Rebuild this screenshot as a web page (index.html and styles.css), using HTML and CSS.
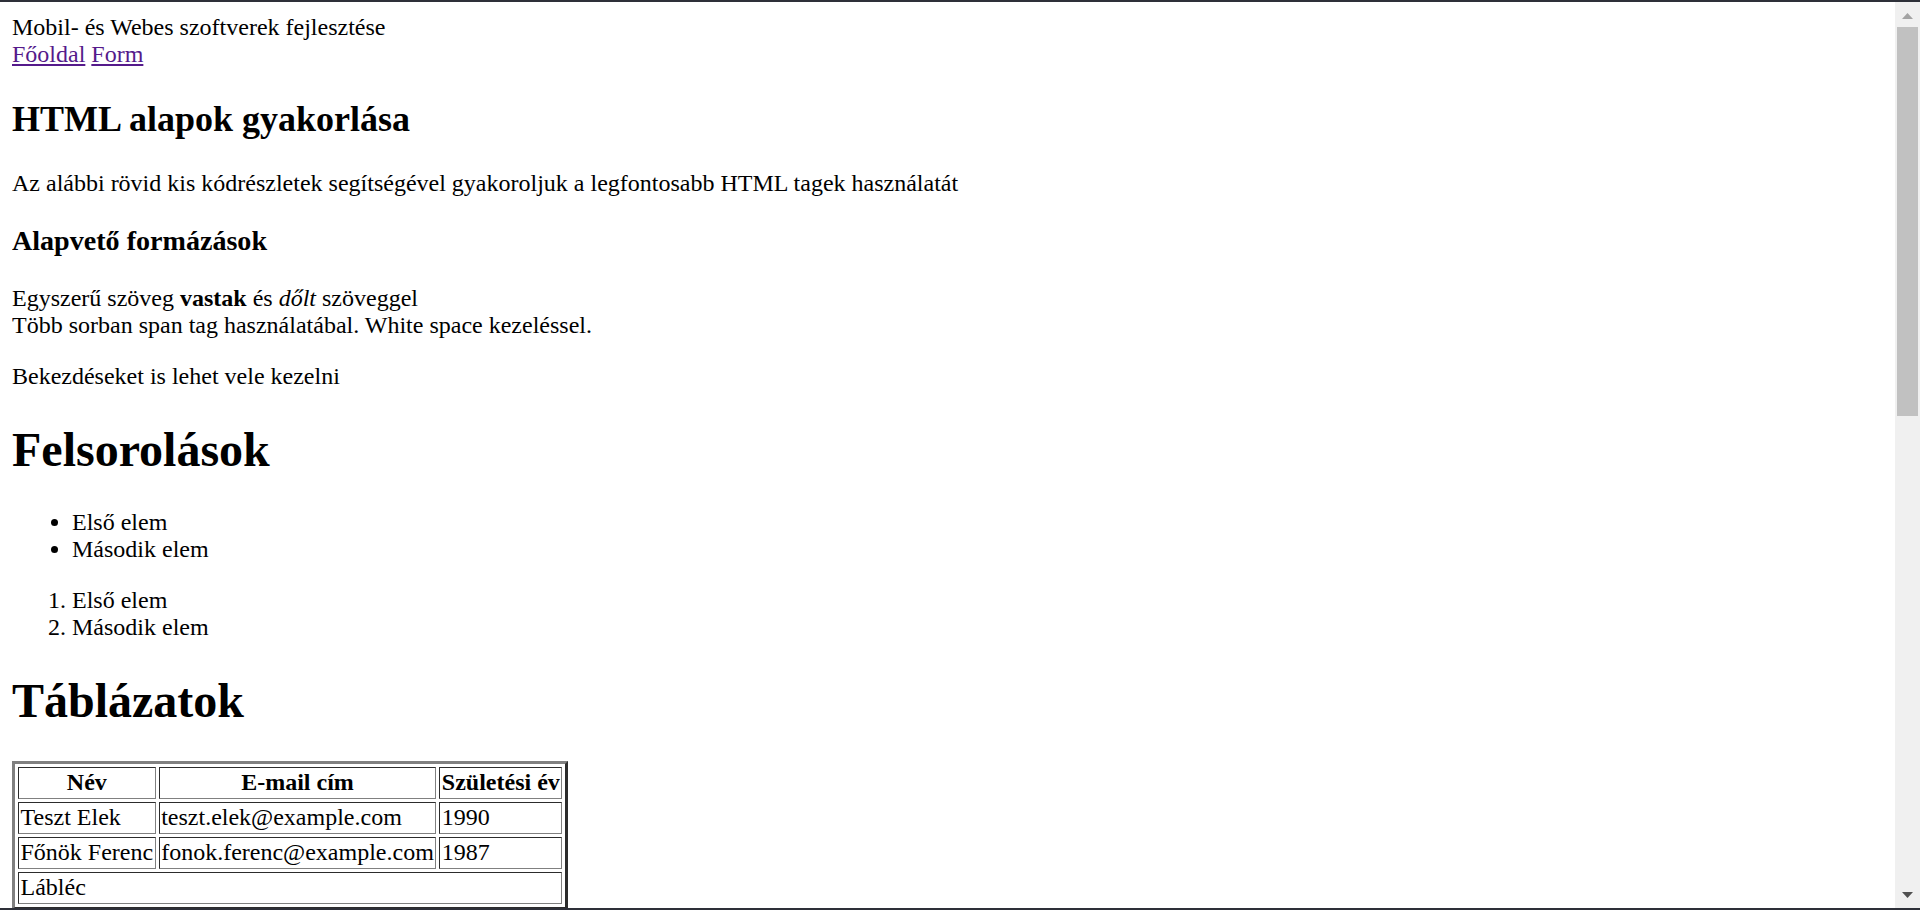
FILE: index.html
```html
<!DOCTYPE html>
<html lang="hu">
<head>
<meta charset="utf-8">
<title>HTML alapok gyakorlása</title>
<link rel="stylesheet" href="styles.css">
</head>
<body>
<header class="site-header">
  <div class="site-title">Mobil- és Webes szoftverek fejlesztése</div>
  <nav class="site-nav"><a href="#fooldal">Főoldal</a> <a href="#form">Form</a></nav>
</header>
<main>
  <h2>HTML alapok gyakorlása</h2>
  <p>Az alábbi rövid kis kódrészletek segítségével gyakoroljuk a legfontosabb HTML tagek használatát</p>
  <h3>Alapvető formázások</h3>
  <p>Egyszerű szöveg <b>vastak</b> és <i>dőlt</i> szöveggel<br>Több sorban span tag használatábal. White space kezeléssel.</p>
  <p>Bekezdéseket is lehet vele kezelni</p>
  <h1>Felsorolások</h1>
  <ul>
    <li>Első elem</li>
    <li>Második elem</li>
  </ul>
  <ol>
    <li>Első elem</li>
    <li>Második elem</li>
  </ol>
  <h1>Táblázatok</h1>
  <table class="data-table">
    <thead>
      <tr><th>Név</th><th>E-mail cím</th><th>Születési év</th></tr>
    </thead>
    <tbody>
      <tr><td>Teszt Elek</td><td>teszt.elek@example.com</td><td>1990</td></tr>
      <tr><td>Főnök Ferenc</td><td>fonok.ferenc@example.com</td><td>1987</td></tr>
    </tbody>
    <tfoot>
      <tr><td colspan="3">Lábléc</td></tr>
    </tfoot>
  </table>
</main>
<div class="fake-scrollbar" aria-hidden="true">
  <svg class="sb-arrow sb-up" width="11" height="6" viewBox="0 0 11 6"><polygon points="5.5,0 11,6 0,6" fill="#a3a3a3"/></svg>
  <div class="sb-thumb"></div>
  <svg class="sb-arrow sb-down" width="11" height="6" viewBox="0 0 11 6"><polygon points="0,0 11,0 5.5,6" fill="#505050"/></svg>
</div>
<div class="window-bottom" aria-hidden="true"></div>
</body>
</html>
```

FILE: styles.css
```css
html {
  border-top: 2px solid #2e3039;
  overflow: hidden;
  background: #fff;
}

body {
  margin: 12px;
  font-family: "Liberation Serif", "Times New Roman", serif;
  font-size: 24px;
  color: #000;
}

a {
  color: #551a8b;
}

h1 {
  font-size: 48px;
  margin: 32.16px 0;
}

h2 {
  font-size: 36px;
  margin: 29.88px 0;
}

h3 {
  font-size: 28.08px;
  margin: 28.08px 0;
}

p {
  margin: 24px 0;
}

ul, ol {
  margin: 24px 0;
  padding-left: 60px;
}

.data-table {
  border: 3px outset #808080;
  border-spacing: 3px;
  border-collapse: separate;
}

.data-table th,
.data-table td {
  border: 1px inset #808080;
  padding: 1.5px;
}

.fake-scrollbar {
  position: fixed;
  top: 2px;
  right: 0;
  bottom: 2px;
  width: 25px;
  background: #f0f0f0;
  display: flex;
  flex-direction: column;
  align-items: center;
}

.sb-arrow {
  flex: none;
}

.sb-up {
  margin-top: 11px;
}

.sb-thumb {
  margin-top: 8px;
  width: 21px;
  height: 389px;
  background: #c1c1c1;
}

.sb-down {
  margin-top: auto;
  margin-bottom: 10px;
}

.window-bottom {
  position: fixed;
  left: 0;
  right: 0;
  bottom: 0;
  height: 2px;
  background: #2e3039;
}
```
